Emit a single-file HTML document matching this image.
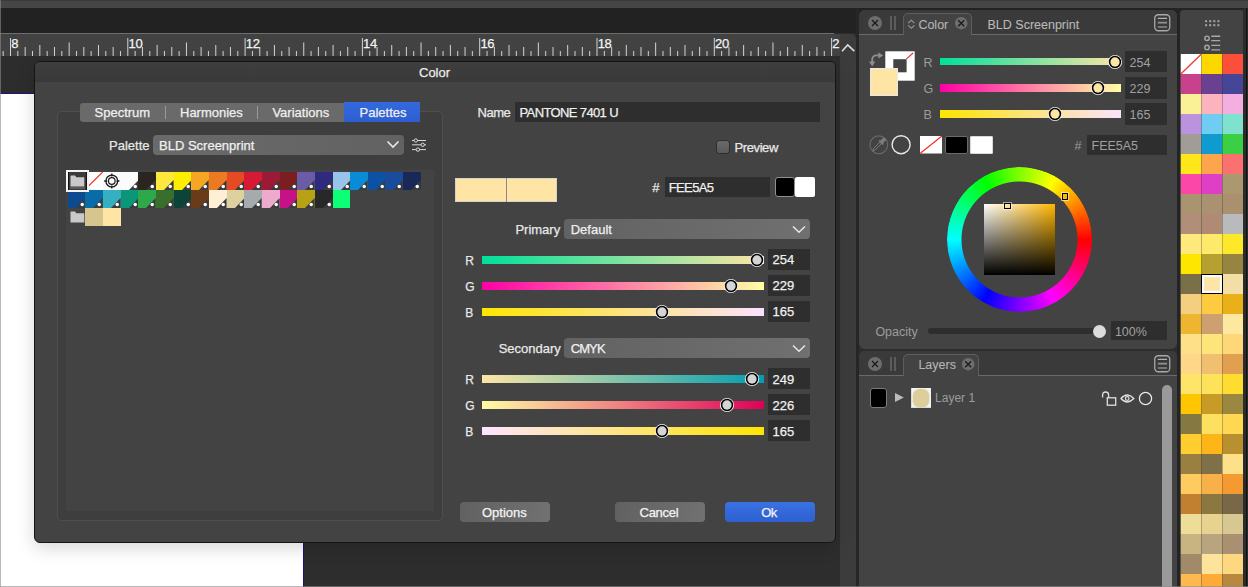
<!DOCTYPE html><html><head><meta charset="utf-8"><style>
*{margin:0;padding:0;box-sizing:border-box}
html,body{width:1248px;height:587px;overflow:hidden;background:#2d2d2d;font-family:"Liberation Sans",sans-serif;font-size:13px;color:#e8e8e8}
.abs{position:absolute}
.t{position:absolute;white-space:nowrap;line-height:1;-webkit-text-stroke:0.25px currentColor}
</style></head><body>
<div class="abs" style="left:0;top:0;width:1248px;height:1px;background:#3a3a3a"></div>
<div class="abs" style="left:0;top:1px;width:1248px;height:7px;background:#464646"></div>
<div class="abs" style="left:0;top:8px;width:1248px;height:25px;background:#222222"></div>
<div class="abs" style="left:0;top:33px;width:834px;height:1px;background:#6e6e6e"></div>
<div class="abs" style="left:0;top:34px;width:840px;height:22px;background:#424242"></div>
<svg class="abs" style="left:0;top:0" width="840" height="60"><g fill="#d4d4d4"><rect x="2.67" y="51.0" width="1" height="5.0"/><rect x="10.00" y="38.0" width="1" height="18.0"/><rect x="17.33" y="51.0" width="1" height="5.0"/><rect x="24.66" y="47.0" width="1" height="9.0"/><rect x="31.99" y="51.0" width="1" height="5.0"/><rect x="39.33" y="45.0" width="1" height="11.0"/><rect x="46.66" y="51.0" width="1" height="5.0"/><rect x="53.99" y="47.0" width="1" height="9.0"/><rect x="61.32" y="51.0" width="1" height="5.0"/><rect x="68.65" y="42.5" width="1" height="13.5"/><rect x="75.98" y="51.0" width="1" height="5.0"/><rect x="83.31" y="47.0" width="1" height="9.0"/><rect x="90.64" y="51.0" width="1" height="5.0"/><rect x="97.97" y="45.0" width="1" height="11.0"/><rect x="105.31" y="51.0" width="1" height="5.0"/><rect x="112.64" y="47.0" width="1" height="9.0"/><rect x="119.97" y="51.0" width="1" height="5.0"/><rect x="127.30" y="38.0" width="1" height="18.0"/><rect x="134.63" y="51.0" width="1" height="5.0"/><rect x="141.96" y="47.0" width="1" height="9.0"/><rect x="149.29" y="51.0" width="1" height="5.0"/><rect x="156.62" y="45.0" width="1" height="11.0"/><rect x="163.96" y="51.0" width="1" height="5.0"/><rect x="171.29" y="47.0" width="1" height="9.0"/><rect x="178.62" y="51.0" width="1" height="5.0"/><rect x="185.95" y="42.5" width="1" height="13.5"/><rect x="193.28" y="51.0" width="1" height="5.0"/><rect x="200.61" y="47.0" width="1" height="9.0"/><rect x="207.94" y="51.0" width="1" height="5.0"/><rect x="215.28" y="45.0" width="1" height="11.0"/><rect x="222.61" y="51.0" width="1" height="5.0"/><rect x="229.94" y="47.0" width="1" height="9.0"/><rect x="237.27" y="51.0" width="1" height="5.0"/><rect x="244.60" y="38.0" width="1" height="18.0"/><rect x="251.93" y="51.0" width="1" height="5.0"/><rect x="259.26" y="47.0" width="1" height="9.0"/><rect x="266.59" y="51.0" width="1" height="5.0"/><rect x="273.93" y="45.0" width="1" height="11.0"/><rect x="281.26" y="51.0" width="1" height="5.0"/><rect x="288.59" y="47.0" width="1" height="9.0"/><rect x="295.92" y="51.0" width="1" height="5.0"/><rect x="303.25" y="42.5" width="1" height="13.5"/><rect x="310.58" y="51.0" width="1" height="5.0"/><rect x="317.91" y="47.0" width="1" height="9.0"/><rect x="325.24" y="51.0" width="1" height="5.0"/><rect x="332.57" y="45.0" width="1" height="11.0"/><rect x="339.91" y="51.0" width="1" height="5.0"/><rect x="347.24" y="47.0" width="1" height="9.0"/><rect x="354.57" y="51.0" width="1" height="5.0"/><rect x="361.90" y="38.0" width="1" height="18.0"/><rect x="369.23" y="51.0" width="1" height="5.0"/><rect x="376.56" y="47.0" width="1" height="9.0"/><rect x="383.89" y="51.0" width="1" height="5.0"/><rect x="391.22" y="45.0" width="1" height="11.0"/><rect x="398.56" y="51.0" width="1" height="5.0"/><rect x="405.89" y="47.0" width="1" height="9.0"/><rect x="413.22" y="51.0" width="1" height="5.0"/><rect x="420.55" y="42.5" width="1" height="13.5"/><rect x="427.88" y="51.0" width="1" height="5.0"/><rect x="435.21" y="47.0" width="1" height="9.0"/><rect x="442.54" y="51.0" width="1" height="5.0"/><rect x="449.88" y="45.0" width="1" height="11.0"/><rect x="457.21" y="51.0" width="1" height="5.0"/><rect x="464.54" y="47.0" width="1" height="9.0"/><rect x="471.87" y="51.0" width="1" height="5.0"/><rect x="479.20" y="38.0" width="1" height="18.0"/><rect x="486.53" y="51.0" width="1" height="5.0"/><rect x="493.86" y="47.0" width="1" height="9.0"/><rect x="501.19" y="51.0" width="1" height="5.0"/><rect x="508.52" y="45.0" width="1" height="11.0"/><rect x="515.86" y="51.0" width="1" height="5.0"/><rect x="523.19" y="47.0" width="1" height="9.0"/><rect x="530.52" y="51.0" width="1" height="5.0"/><rect x="537.85" y="42.5" width="1" height="13.5"/><rect x="545.18" y="51.0" width="1" height="5.0"/><rect x="552.51" y="47.0" width="1" height="9.0"/><rect x="559.84" y="51.0" width="1" height="5.0"/><rect x="567.17" y="45.0" width="1" height="11.0"/><rect x="574.51" y="51.0" width="1" height="5.0"/><rect x="581.84" y="47.0" width="1" height="9.0"/><rect x="589.17" y="51.0" width="1" height="5.0"/><rect x="596.50" y="38.0" width="1" height="18.0"/><rect x="603.83" y="51.0" width="1" height="5.0"/><rect x="611.16" y="47.0" width="1" height="9.0"/><rect x="618.49" y="51.0" width="1" height="5.0"/><rect x="625.82" y="45.0" width="1" height="11.0"/><rect x="633.16" y="51.0" width="1" height="5.0"/><rect x="640.49" y="47.0" width="1" height="9.0"/><rect x="647.82" y="51.0" width="1" height="5.0"/><rect x="655.15" y="42.5" width="1" height="13.5"/><rect x="662.48" y="51.0" width="1" height="5.0"/><rect x="669.81" y="47.0" width="1" height="9.0"/><rect x="677.14" y="51.0" width="1" height="5.0"/><rect x="684.48" y="45.0" width="1" height="11.0"/><rect x="691.81" y="51.0" width="1" height="5.0"/><rect x="699.14" y="47.0" width="1" height="9.0"/><rect x="706.47" y="51.0" width="1" height="5.0"/><rect x="713.80" y="38.0" width="1" height="18.0"/><rect x="721.13" y="51.0" width="1" height="5.0"/><rect x="728.46" y="47.0" width="1" height="9.0"/><rect x="735.79" y="51.0" width="1" height="5.0"/><rect x="743.12" y="45.0" width="1" height="11.0"/><rect x="750.46" y="51.0" width="1" height="5.0"/><rect x="757.79" y="47.0" width="1" height="9.0"/><rect x="765.12" y="51.0" width="1" height="5.0"/><rect x="772.45" y="42.5" width="1" height="13.5"/><rect x="779.78" y="51.0" width="1" height="5.0"/><rect x="787.11" y="47.0" width="1" height="9.0"/><rect x="794.44" y="51.0" width="1" height="5.0"/><rect x="801.77" y="45.0" width="1" height="11.0"/><rect x="809.11" y="51.0" width="1" height="5.0"/><rect x="816.44" y="47.0" width="1" height="9.0"/><rect x="823.77" y="51.0" width="1" height="5.0"/><rect x="831.10" y="38.0" width="1" height="18.0"/></g></svg>
<div class="t" style="left:11.2px;top:37.3px;font-size:13px;color:#f4f4f4;letter-spacing:-0.3px">8</div>
<div class="t" style="left:128.5px;top:37.3px;font-size:13px;color:#f4f4f4;letter-spacing:-0.3px">10</div>
<div class="t" style="left:245.8px;top:37.3px;font-size:13px;color:#f4f4f4;letter-spacing:-0.3px">12</div>
<div class="t" style="left:363.1px;top:37.3px;font-size:13px;color:#f4f4f4;letter-spacing:-0.3px">14</div>
<div class="t" style="left:480.4px;top:37.3px;font-size:13px;color:#f4f4f4;letter-spacing:-0.3px">16</div>
<div class="t" style="left:597.7px;top:37.3px;font-size:13px;color:#f4f4f4;letter-spacing:-0.3px">18</div>
<div class="t" style="left:715.0px;top:37.3px;font-size:13px;color:#f4f4f4;letter-spacing:-0.3px">20</div>
<div class="t" style="left:832.3px;top:37.3px;font-size:13px;color:#f4f4f4;letter-spacing:-0.3px">2</div>
<div class="abs" style="left:0;top:0;width:1px;height:587px;background:rgba(140,140,140,0.6);z-index:5"></div>
<div class="abs" style="left:0;top:93px;width:303px;height:1px;background:#1d1080"></div>
<div class="abs" style="left:0;top:94px;width:303px;height:493px;background:#ffffff"></div>
<div class="abs" style="left:303px;top:93px;width:1px;height:494px;background:#1d1080"></div>
<div class="abs" style="left:840px;top:34px;width:16px;height:553px;background:#3c3c3c;border-top-right-radius:5px"></div>
<div class="abs" style="left:856px;top:8px;width:3px;height:579px;background:#262626"></div>
<svg class="abs" style="left:840px;top:40px" width="16" height="14"><polyline points="2,11.2 7.7,5 14.3,11.2" fill="none" stroke="#dcdcdc" stroke-width="1.6"/></svg>
<div class="abs" style="left:34px;top:61px;width:802px;height:482px;border-radius:6px;background:#434343;border:1px solid #151515;box-shadow:0 5px 18px rgba(0,0,0,0.16);overflow:hidden">
<div class="abs" style="left:0;top:0;width:800px;height:20px;background:linear-gradient(#3e3e3e,#393939)"></div>
</div>
<div class="t" style="left:419px;top:66px;font-size:13px;color:#ececec">Color</div>
<div class="abs" style="left:57px;top:111px;width:386px;height:410px;border:1px solid #4f4f4f;border-radius:5px;background:#3e3e3e"></div>
<div class="abs" style="left:66px;top:170px;width:368px;height:341px;background:#434343"></div>
<svg class="abs" style="left:85.40px;top:171.90px" width="18.15" height="18.15"><rect width="100%" height="100%" fill="#fff"/><line x1="0" y1="17.65" x2="17.65" y2="0" stroke="#f03a2a" stroke-width="1.2"/></svg>
<svg class="abs" style="left:103.05px;top:171.90px" width="18.15" height="18.15"><rect width="100%" height="100%" fill="#fafafa"/><g stroke="#1a1a1a" fill="none" stroke-width="1.3"><circle cx="8.8" cy="9" r="5.9"/><circle cx="8.8" cy="9" r="3.3" fill="#fff" stroke-width="1.2"/><path d="M1.2 9 H4.2 M13.4 9 H16.4 M8.8 1.4 V4.4 M8.8 13.6 V16.6"/></g></svg>
<svg class="abs" style="left:120.70px;top:171.90px" width="18.15" height="18.15"><rect width="18.15" height="100%" fill="#fbfbfb"/><polygon points="7.85,18.15 17.65,8.05 17.65,18.15" fill="#3b3b3b"/><circle cx="14.25" cy="14.55" r="1.75" fill="#fff"/></svg>
<svg class="abs" style="left:138.35px;top:171.90px" width="18.15" height="18.15"><rect width="18.15" height="100%" fill="#2a2520"/><polygon points="7.85,18.15 17.65,8.05 17.65,18.15" fill="#3b3b3b"/><circle cx="14.25" cy="14.55" r="1.75" fill="#fff"/></svg>
<svg class="abs" style="left:156.00px;top:171.90px" width="18.15" height="18.15"><rect width="18.15" height="100%" fill="#fde83d"/><polygon points="7.85,18.15 17.65,8.05 17.65,18.15" fill="#3b3b3b"/><circle cx="14.25" cy="14.55" r="1.75" fill="#fff"/></svg>
<svg class="abs" style="left:173.65px;top:171.90px" width="18.15" height="18.15"><rect width="18.15" height="100%" fill="#fdee00"/><polygon points="7.85,18.15 17.65,8.05 17.65,18.15" fill="#3b3b3b"/><circle cx="14.25" cy="14.55" r="1.75" fill="#fff"/></svg>
<svg class="abs" style="left:191.30px;top:171.90px" width="18.15" height="18.15"><rect width="18.15" height="100%" fill="#f5a623"/><polygon points="7.85,18.15 17.65,8.05 17.65,18.15" fill="#3b3b3b"/><circle cx="14.25" cy="14.55" r="1.75" fill="#fff"/></svg>
<svg class="abs" style="left:208.95px;top:171.90px" width="18.15" height="18.15"><rect width="18.15" height="100%" fill="#ec7a22"/><polygon points="7.85,18.15 17.65,8.05 17.65,18.15" fill="#3b3b3b"/><circle cx="14.25" cy="14.55" r="1.75" fill="#fff"/></svg>
<svg class="abs" style="left:226.60px;top:171.90px" width="18.15" height="18.15"><rect width="18.15" height="100%" fill="#e44b24"/><polygon points="7.85,18.15 17.65,8.05 17.65,18.15" fill="#3b3b3b"/><circle cx="14.25" cy="14.55" r="1.75" fill="#fff"/></svg>
<svg class="abs" style="left:244.25px;top:171.90px" width="18.15" height="18.15"><rect width="18.15" height="100%" fill="#d61a35"/><polygon points="7.85,18.15 17.65,8.05 17.65,18.15" fill="#3b3b3b"/><circle cx="14.25" cy="14.55" r="1.75" fill="#fff"/></svg>
<svg class="abs" style="left:261.90px;top:171.90px" width="18.15" height="18.15"><rect width="18.15" height="100%" fill="#9b1a35"/><polygon points="7.85,18.15 17.65,8.05 17.65,18.15" fill="#3b3b3b"/><circle cx="14.25" cy="14.55" r="1.75" fill="#fff"/></svg>
<svg class="abs" style="left:279.55px;top:171.90px" width="18.15" height="18.15"><rect width="18.15" height="100%" fill="#7a1e20"/><polygon points="7.85,18.15 17.65,8.05 17.65,18.15" fill="#3b3b3b"/><circle cx="14.25" cy="14.55" r="1.75" fill="#fff"/></svg>
<svg class="abs" style="left:297.20px;top:171.90px" width="18.15" height="18.15"><rect width="18.15" height="100%" fill="#6c5ba6"/><polygon points="7.85,18.15 17.65,8.05 17.65,18.15" fill="#3b3b3b"/><circle cx="14.25" cy="14.55" r="1.75" fill="#fff"/></svg>
<svg class="abs" style="left:314.85px;top:171.90px" width="18.15" height="18.15"><rect width="18.15" height="100%" fill="#2e2a7d"/><polygon points="7.85,18.15 17.65,8.05 17.65,18.15" fill="#3b3b3b"/><circle cx="14.25" cy="14.55" r="1.75" fill="#fff"/></svg>
<svg class="abs" style="left:332.50px;top:171.90px" width="18.15" height="18.15"><rect width="18.15" height="100%" fill="#98c4ea"/><polygon points="7.85,18.15 17.65,8.05 17.65,18.15" fill="#3b3b3b"/><circle cx="14.25" cy="14.55" r="1.75" fill="#fff"/></svg>
<svg class="abs" style="left:350.15px;top:171.90px" width="18.15" height="18.15"><rect width="18.15" height="100%" fill="#0a8bd6"/><polygon points="7.85,18.15 17.65,8.05 17.65,18.15" fill="#3b3b3b"/><circle cx="14.25" cy="14.55" r="1.75" fill="#fff"/></svg>
<svg class="abs" style="left:367.80px;top:171.90px" width="18.15" height="18.15"><rect width="18.15" height="100%" fill="#0d52a2"/><polygon points="7.85,18.15 17.65,8.05 17.65,18.15" fill="#3b3b3b"/><circle cx="14.25" cy="14.55" r="1.75" fill="#fff"/></svg>
<svg class="abs" style="left:385.45px;top:171.90px" width="18.15" height="18.15"><rect width="18.15" height="100%" fill="#1a4c9c"/><polygon points="7.85,18.15 17.65,8.05 17.65,18.15" fill="#3b3b3b"/><circle cx="14.25" cy="14.55" r="1.75" fill="#fff"/></svg>
<svg class="abs" style="left:403.10px;top:171.90px" width="18.15" height="18.15"><rect width="18.15" height="100%" fill="#1a2858"/><polygon points="7.85,18.15 17.65,8.05 17.65,18.15" fill="#3b3b3b"/><circle cx="14.25" cy="14.55" r="1.75" fill="#fff"/></svg>
<svg class="abs" style="left:67.75px;top:190.05px" width="18.15" height="18.15"><rect width="18.15" height="100%" fill="#0d4b8e"/><polygon points="7.85,18.15 17.65,8.05 17.65,18.15" fill="#3b3b3b"/><circle cx="14.25" cy="14.55" r="1.75" fill="#fff"/></svg>
<svg class="abs" style="left:85.40px;top:190.05px" width="18.15" height="18.15"><rect width="18.15" height="100%" fill="#0a6ba9"/><polygon points="7.85,18.15 17.65,8.05 17.65,18.15" fill="#3b3b3b"/><circle cx="14.25" cy="14.55" r="1.75" fill="#fff"/></svg>
<svg class="abs" style="left:103.05px;top:190.05px" width="18.15" height="18.15"><rect width="18.15" height="100%" fill="#35b0c0"/><polygon points="7.85,18.15 17.65,8.05 17.65,18.15" fill="#3b3b3b"/><circle cx="14.25" cy="14.55" r="1.75" fill="#fff"/></svg>
<svg class="abs" style="left:120.70px;top:190.05px" width="18.15" height="18.15"><rect width="18.15" height="100%" fill="#0a9679"/><polygon points="7.85,18.15 17.65,8.05 17.65,18.15" fill="#3b3b3b"/><circle cx="14.25" cy="14.55" r="1.75" fill="#fff"/></svg>
<svg class="abs" style="left:138.35px;top:190.05px" width="18.15" height="18.15"><rect width="18.15" height="100%" fill="#2da84b"/><polygon points="7.85,18.15 17.65,8.05 17.65,18.15" fill="#3b3b3b"/><circle cx="14.25" cy="14.55" r="1.75" fill="#fff"/></svg>
<svg class="abs" style="left:156.00px;top:190.05px" width="18.15" height="18.15"><rect width="18.15" height="100%" fill="#3a6e2c"/><polygon points="7.85,18.15 17.65,8.05 17.65,18.15" fill="#3b3b3b"/><circle cx="14.25" cy="14.55" r="1.75" fill="#fff"/></svg>
<svg class="abs" style="left:173.65px;top:190.05px" width="18.15" height="18.15"><rect width="18.15" height="100%" fill="#0c4538"/><polygon points="7.85,18.15 17.65,8.05 17.65,18.15" fill="#3b3b3b"/><circle cx="14.25" cy="14.55" r="1.75" fill="#fff"/></svg>
<svg class="abs" style="left:191.30px;top:190.05px" width="18.15" height="18.15"><rect width="18.15" height="100%" fill="#6a3b18"/><polygon points="7.85,18.15 17.65,8.05 17.65,18.15" fill="#3b3b3b"/><circle cx="14.25" cy="14.55" r="1.75" fill="#fff"/></svg>
<svg class="abs" style="left:208.95px;top:190.05px" width="18.15" height="18.15"><rect width="18.15" height="100%" fill="#fdf0d6"/><polygon points="7.85,18.15 17.65,8.05 17.65,18.15" fill="#3b3b3b"/><circle cx="14.25" cy="14.55" r="1.75" fill="#fff"/></svg>
<svg class="abs" style="left:226.60px;top:190.05px" width="18.15" height="18.15"><rect width="18.15" height="100%" fill="#ded1a0"/><polygon points="7.85,18.15 17.65,8.05 17.65,18.15" fill="#3b3b3b"/><circle cx="14.25" cy="14.55" r="1.75" fill="#fff"/></svg>
<svg class="abs" style="left:244.25px;top:190.05px" width="18.15" height="18.15"><rect width="18.15" height="100%" fill="#a5aaad"/><polygon points="7.85,18.15 17.65,8.05 17.65,18.15" fill="#3b3b3b"/><circle cx="14.25" cy="14.55" r="1.75" fill="#fff"/></svg>
<svg class="abs" style="left:261.90px;top:190.05px" width="18.15" height="18.15"><rect width="18.15" height="100%" fill="#eeaacc"/><polygon points="7.85,18.15 17.65,8.05 17.65,18.15" fill="#3b3b3b"/><circle cx="14.25" cy="14.55" r="1.75" fill="#fff"/></svg>
<svg class="abs" style="left:279.55px;top:190.05px" width="18.15" height="18.15"><rect width="18.15" height="100%" fill="#c51286"/><polygon points="7.85,18.15 17.65,8.05 17.65,18.15" fill="#3b3b3b"/><circle cx="14.25" cy="14.55" r="1.75" fill="#fff"/></svg>
<svg class="abs" style="left:297.20px;top:190.05px" width="18.15" height="18.15"><rect width="18.15" height="100%" fill="#b7a115"/><polygon points="7.85,18.15 17.65,8.05 17.65,18.15" fill="#3b3b3b"/><circle cx="14.25" cy="14.55" r="1.75" fill="#fff"/></svg>
<svg class="abs" style="left:314.85px;top:190.05px" width="18.15" height="18.15"><rect width="18.15" height="100%" fill="#282828"/><polygon points="7.85,18.15 17.65,8.05 17.65,18.15" fill="#3b3b3b"/><circle cx="14.25" cy="14.55" r="1.75" fill="#fff"/></svg>
<div class="abs" style="left:332.50px;top:190.05px;width:17.65px;height:18.15px;background:#0bff77"></div>
<div class="abs" style="left:85.40px;top:208.20px;width:17.65px;height:18.15px;background:#d6c68d"></div>
<div class="abs" style="left:103.05px;top:208.20px;width:17.65px;height:18.15px;background:#fee5a5"></div>
<div class="abs" style="left:66px;top:169.8px;width:22.6px;height:22.7px;border:2px solid #f4f4f4;background:#111"></div>
<div class="abs" style="left:68.5px;top:172.3px;width:17.6px;height:17.7px;background:#3a3a3a"></div>
<svg class="abs" style="left:70.0px;top:174.7px" width="15" height="12"><path d="M0.5 1.2 Q0.5 0.5 1.2 0.5 L5 0.5 L6.3 2.3 L13.8 2.3 Q14.3 2.3 14.3 2.8 L14.3 11.5 L0.5 11.5 Z" fill="#c9c9c9"/></svg>
<div class="abs" style="left:70px;top:186.5px;width:14.5px;height:2.5px;background:#5a5a5a"></div>
<svg class="abs" style="left:69.8px;top:211.0px" width="15" height="12"><path d="M0.5 1.2 Q0.5 0.5 1.2 0.5 L5 0.5 L6.3 2.3 L13.8 2.3 Q14.3 2.3 14.3 2.8 L14.3 11.5 L0.5 11.5 Z" fill="#c9c9c9"/></svg>
<div class="abs" style="left:80px;top:103px;width:340px;height:19px;background:#6a6a6a;border-radius:3px 0 0 3px"></div>
<div class="abs" style="left:344px;top:102.3px;width:76px;height:19.9px;background:linear-gradient(#3369de,#2e5fd1)"></div>
<div class="abs" style="left:165px;top:106px;width:1px;height:13px;background:#9a9a9a"></div>
<div class="abs" style="left:257px;top:106px;width:1px;height:13px;background:#9a9a9a"></div>
<div class="t" style="left:94.5px;top:106px;color:#f0f0f0">Spectrum</div>
<div class="t" style="left:180.0px;top:106px;color:#f0f0f0">Harmonies</div>
<div class="t" style="left:272.4px;top:106px;color:#f0f0f0">Variations</div>
<div class="t" style="left:359.5px;top:106px;color:#f0f0f0">Palettes</div>
<div class="t" style="left:109px;top:138.5px;color:#e8e8e8">Palette</div>
<div class="abs" style="left:153px;top:135px;width:251px;height:20px;border-radius:4px;background:linear-gradient(90deg,#6a6a6a,#626262)"></div>
<div class="t" style="left:159px;top:138.5px;color:#f0f0f0">BLD Screenprint</div>
<svg class="abs" style="left:385px;top:139px" width="16" height="12"><polyline points="2.5,2.5 8,8 13.5,2.5" fill="none" stroke="#e8e8e8" stroke-width="1.6"/></svg>
<svg class="abs" style="left:410px;top:136px" width="18" height="17"><g stroke="#d8d8d8" stroke-width="1" fill="#434343"><line x1="2" y1="4.5" x2="16" y2="4.5"/><line x1="2" y1="8.8" x2="16" y2="8.8"/><line x1="2" y1="13.6" x2="16" y2="13.6"/><circle cx="5.8" cy="4.5" r="1.7"/><circle cx="12.7" cy="8.8" r="1.7"/><circle cx="7.9" cy="13.6" r="1.7"/></g></svg>
<div class="t" style="left:477.6px;top:106px;color:#e8e8e8;letter-spacing:-0.5px">Name</div>
<div class="abs" style="left:515px;top:102px;width:305px;height:20px;background:#2e2e2e"></div>
<div class="t" style="left:519.5px;top:106px;color:#f0f0f0;letter-spacing:-0.62px">PANTONE 7401 U</div>
<div class="abs" style="left:715.5px;top:139.6px;width:14.8px;height:14.8px;border-radius:3.5px;background:linear-gradient(#6a6a6a,#5a5a5a);border:1px solid #2e2e2e"></div>
<div class="t" style="left:734.5px;top:141px;color:#e8e8e8;letter-spacing:-0.4px">Preview</div>
<div class="abs" style="left:455px;top:177.5px;width:102px;height:24.5px;background:#fee5a5;border:1px solid #d9d4c8"></div>
<div class="abs" style="left:506px;top:178px;width:1px;height:23.5px;background:#8a8a8a"></div>
<div class="t" style="left:652.3px;top:181px;color:#e8e8e8">#</div>
<div class="abs" style="left:665px;top:177px;width:105px;height:19.5px;background:#2e2e2e"></div>
<div class="t" style="left:668.7px;top:181px;color:#f0f0f0;letter-spacing:-0.6px">FEE5A5</div>
<div class="abs" style="left:775px;top:177px;width:20px;height:20px;background:#000;border:1px solid #909090;border-radius:3px"></div>
<div class="abs" style="left:795px;top:177px;width:20px;height:20px;background:#fff;border-radius:2px"></div>
<div class="t" style="left:515.4px;top:222.6px;color:#e8e8e8">Primary</div>
<div class="abs" style="left:564px;top:219px;width:246px;height:19.5px;border-radius:4px;background:linear-gradient(100deg,#626262,#707070)"></div>
<div class="t" style="left:570.7px;top:222.6px;color:#f0f0f0">Default</div>
<svg class="abs" style="left:790px;top:222.6px" width="18" height="12"><polyline points="3,3.5 9,9.3 15,3.5" fill="none" stroke="#e8e8e8" stroke-width="1.5"/></svg>
<div class="t" style="left:498.7px;top:341.6px;color:#e8e8e8">Secondary</div>
<div class="abs" style="left:564px;top:338px;width:246px;height:19.5px;border-radius:4px;background:linear-gradient(100deg,#626262,#707070)"></div>
<div class="t" style="left:570.7px;top:341.6px;color:#f0f0f0"><span style="letter-spacing:-0.9px">CMYK</span></div>
<svg class="abs" style="left:790px;top:341.6px" width="18" height="12"><polyline points="3,3.5 9,9.3 15,3.5" fill="none" stroke="#e8e8e8" stroke-width="1.5"/></svg>
<div class="t" style="left:465.3px;top:255.1px;font-size:12px;color:#e8e8e8">R</div>
<div class="abs" style="left:482px;top:256.20px;width:282px;height:7.5px;background:linear-gradient(90deg,#00e09a,#fee5a5)"></div>
<svg class="abs" style="left:749.14px;top:251.95px" width="16" height="16"><circle cx="8" cy="8" r="7.1" fill="#f4f4f4"/><circle cx="8" cy="8" r="6.2" fill="#000"/><circle cx="8" cy="8" r="4.65" fill="#d4d4d4"/></svg>
<div class="abs" style="left:768px;top:249.1px;width:42px;height:21px;background:#2e2e2e"></div>
<div class="t" style="left:772.5px;top:253.4px;color:#f0f0f0">254</div>
<div class="t" style="left:465.3px;top:281.1px;font-size:12px;color:#e8e8e8">G</div>
<div class="abs" style="left:482px;top:282.15px;width:282px;height:7.5px;background:linear-gradient(90deg,#fe00a5,#fefea5)"></div>
<svg class="abs" style="left:722.54px;top:277.90px" width="16" height="16"><circle cx="8" cy="8" r="7.1" fill="#f4f4f4"/><circle cx="8" cy="8" r="6.2" fill="#000"/><circle cx="8" cy="8" r="4.65" fill="#d4d4d4"/></svg>
<div class="abs" style="left:768px;top:275.1px;width:42px;height:21px;background:#2e2e2e"></div>
<div class="t" style="left:772.5px;top:279.4px;color:#f0f0f0">229</div>
<div class="t" style="left:465.3px;top:307.1px;font-size:12px;color:#e8e8e8">B</div>
<div class="abs" style="left:482px;top:308.10px;width:282px;height:7.5px;background:linear-gradient(90deg,#fee500,#fbe2ff)"></div>
<svg class="abs" style="left:654.45px;top:303.85px" width="16" height="16"><circle cx="8" cy="8" r="7.1" fill="#f4f4f4"/><circle cx="8" cy="8" r="6.2" fill="#000"/><circle cx="8" cy="8" r="4.65" fill="#d4d4d4"/></svg>
<div class="abs" style="left:768px;top:301.1px;width:42px;height:21px;background:#2e2e2e"></div>
<div class="t" style="left:772.5px;top:305.4px;color:#f0f0f0">165</div>
<div class="t" style="left:465.3px;top:374.3px;font-size:12px;color:#e8e8e8">R</div>
<div class="abs" style="left:482px;top:375.35px;width:282px;height:7.5px;background:linear-gradient(90deg,#fde5a5,#009fb0)"></div>
<svg class="abs" style="left:743.82px;top:371.10px" width="16" height="16"><circle cx="8" cy="8" r="7.1" fill="#f4f4f4"/><circle cx="8" cy="8" r="6.2" fill="#000"/><circle cx="8" cy="8" r="4.65" fill="#d4d4d4"/></svg>
<div class="abs" style="left:768px;top:368.3px;width:42px;height:21px;background:#2e2e2e"></div>
<div class="t" style="left:772.5px;top:372.6px;color:#f0f0f0">249</div>
<div class="t" style="left:465.3px;top:400.2px;font-size:12px;color:#e8e8e8">G</div>
<div class="abs" style="left:482px;top:401.25px;width:282px;height:7.5px;background:linear-gradient(90deg,#fefba5,#e0005a)"></div>
<svg class="abs" style="left:719.35px;top:397.00px" width="16" height="16"><circle cx="8" cy="8" r="7.1" fill="#f4f4f4"/><circle cx="8" cy="8" r="6.2" fill="#000"/><circle cx="8" cy="8" r="4.65" fill="#d4d4d4"/></svg>
<div class="abs" style="left:768px;top:394.2px;width:42px;height:21px;background:#2e2e2e"></div>
<div class="t" style="left:772.5px;top:398.5px;color:#f0f0f0">226</div>
<div class="t" style="left:465.3px;top:426.2px;font-size:12px;color:#e8e8e8">B</div>
<div class="abs" style="left:482px;top:427.25px;width:282px;height:7.5px;background:linear-gradient(90deg,#fde5ff,#fee500)"></div>
<svg class="abs" style="left:654.45px;top:423.00px" width="16" height="16"><circle cx="8" cy="8" r="7.1" fill="#f4f4f4"/><circle cx="8" cy="8" r="6.2" fill="#000"/><circle cx="8" cy="8" r="4.65" fill="#d4d4d4"/></svg>
<div class="abs" style="left:768px;top:420.2px;width:42px;height:21px;background:#2e2e2e"></div>
<div class="t" style="left:772.5px;top:424.5px;color:#f0f0f0">165</div>
<div class="abs" style="left:460px;top:502px;width:90px;height:20px;border-radius:4px;background:linear-gradient(100deg,#616161,#717171)"></div>
<div class="t" style="left:482.0px;top:506px;color:#f4f4f4">Options</div>
<div class="abs" style="left:615px;top:502px;width:90px;height:20px;border-radius:4px;background:linear-gradient(100deg,#616161,#717171)"></div>
<div class="t" style="left:639.6px;top:506px;color:#f4f4f4"><span style="letter-spacing:-0.3px">Cancel</span></div>
<div class="abs" style="left:725px;top:502px;width:90px;height:20px;border-radius:4px;background:linear-gradient(#3a72e4,#2d5fd0)"></div>
<div class="t" style="left:761.2px;top:506px;color:#f4f4f4"><span style="letter-spacing:-0.6px">Ok</span></div>
<div class="abs" style="left:859px;top:10px;width:318px;height:338.5px;background:#434343;border-radius:6px"></div>
<div class="abs" style="left:859px;top:10px;width:318px;height:24.4px;background:#3a3a3a;border-radius:6px 6px 0 0"></div>
<div class="abs" style="left:859px;top:33.5px;width:318px;height:1px;background:#6a6a6a"></div>
<svg class="abs" style="left:867.0px;top:15.0px" width="16" height="16"><circle cx="8.0" cy="8.0" r="7.0" fill="#6d6d6d"/><path d="M5.0 5.0 L11.0 11.0 M11.0 5.0 L5.0 11.0" stroke="#1a1a1a" stroke-width="1.3"/></svg>
<div class="abs" style="left:890px;top:16.0px;width:2px;height:14px;background:#5c5c5c"></div>
<div class="abs" style="left:894px;top:16.0px;width:2px;height:14px;background:#5c5c5c"></div>
<div class="abs" style="left:902.6px;top:12.7px;width:69.9px;height:22.3px;background:#434343;border:1px solid #5e5e5e;border-bottom:none;border-radius:5px 5px 0 0"></div>
<div class="t" style="left:918.4px;top:18.6px;font-size:12.5px;color:#b4b4b4;-webkit-text-stroke:0.1px">Color</div>
<svg class="abs" style="left:953.9px;top:15.8px" width="14" height="14"><circle cx="7.2" cy="7.2" r="6.2" fill="#6d6d6d"/><path d="M4.2 4.2 L10.2 10.2 M10.2 4.2 L4.2 10.2" stroke="#1a1a1a" stroke-width="1.3"/></svg>
<svg class="abs" style="left:1153.5px;top:14.3px" width="17" height="18"><rect x="0.75" y="0.75" width="15" height="16" rx="3.5" fill="none" stroke="#a8a8a8" stroke-width="1.3"/><path d="M3.8 4.3 H13 M3.8 13 H13" stroke="#b0b0b0" stroke-width="1.2"/><path d="M3.8 8.65 H13" stroke="#909090" stroke-width="1.8"/></svg>
<svg class="abs" style="left:907px;top:19px" width="9" height="11"><path d="M1.2 4.2 L4.3 1.2 L7.4 4.2 M1.2 6.3 L4.3 9.3 L7.4 6.3" fill="none" stroke="#9a9a9a" stroke-width="1.1"/></svg><div class="t" style="left:987.5px;top:18.7px;font-size:12.5px;color:#b8b8b8;-webkit-text-stroke:0.1px">BLD Screenprint</div>
<svg class="abs" style="left:885px;top:51px" width="30" height="30"><rect x="0.3" y="0.3" width="29.4" height="29.4" fill="#fff"/><rect x="8.3" y="8.2" width="13.3" height="13.1" fill="#434343"/><line x1="21.3" y1="8.2" x2="28" y2="2" stroke="#f02a1a" stroke-width="1.1"/></svg>
<div class="abs" style="left:869.5px;top:67.7px;width:28.8px;height:28.8px;background:#fee5a5;border:1px solid #e8e8e8"></div>
<svg class="abs" style="left:869px;top:52px" width="16" height="15"><path d="M3.2 12.5 L3.2 8 Q3.2 3.4 7.5 3.4 L10 3.4" fill="none" stroke="#8e8e8e" stroke-width="1.8"/><polygon points="9.3,0.3 14.3,3.4 9.3,6.5" fill="#8e8e8e"/><polygon points="0.1,9.6 3.2,14.5 6.3,9.6" fill="#8e8e8e"/></svg>
<div class="t" style="left:923.5px;top:57.0px;font-size:12.5px;color:#9c9c9c;-webkit-text-stroke:0">R</div>
<div class="abs" style="left:940px;top:58.15px;width:181px;height:7.3px;background:linear-gradient(90deg,#00e09a,#fee5a5)"></div>
<svg class="abs" style="left:1106.83px;top:53.80px" width="16" height="16"><circle cx="8" cy="8" r="7.1" fill="#f4f4f4"/><circle cx="8" cy="8" r="6.2" fill="#000"/><circle cx="8" cy="8" r="4.65" fill="#fee5a5"/></svg>
<div class="abs" style="left:1125.4px;top:50.9px;width:41.6px;height:21.6px;background:#2e2e2e"></div>
<div class="t" style="left:1129.5px;top:57.0px;font-size:12.5px;color:#a0a0a0;-webkit-text-stroke:0">254</div>
<div class="t" style="left:923.5px;top:83.3px;font-size:12.5px;color:#9c9c9c;-webkit-text-stroke:0">G</div>
<div class="abs" style="left:940px;top:84.45px;width:181px;height:7.3px;background:linear-gradient(90deg,#fe00a5,#fefea5)"></div>
<svg class="abs" style="left:1090.14px;top:80.10px" width="16" height="16"><circle cx="8" cy="8" r="7.1" fill="#f4f4f4"/><circle cx="8" cy="8" r="6.2" fill="#000"/><circle cx="8" cy="8" r="4.65" fill="#fee5a5"/></svg>
<div class="abs" style="left:1125.4px;top:77.2px;width:41.6px;height:21.6px;background:#2e2e2e"></div>
<div class="t" style="left:1129.5px;top:83.3px;font-size:12.5px;color:#a0a0a0;-webkit-text-stroke:0">229</div>
<div class="t" style="left:923.5px;top:109.2px;font-size:12.5px;color:#9c9c9c;-webkit-text-stroke:0">B</div>
<div class="abs" style="left:940px;top:110.35px;width:181px;height:7.3px;background:linear-gradient(90deg,#fee500,#fbe2ff)"></div>
<svg class="abs" style="left:1047.39px;top:106.00px" width="16" height="16"><circle cx="8" cy="8" r="7.1" fill="#f4f4f4"/><circle cx="8" cy="8" r="6.2" fill="#000"/><circle cx="8" cy="8" r="4.65" fill="#fee5a5"/></svg>
<div class="abs" style="left:1125.4px;top:103.1px;width:41.6px;height:21.6px;background:#2e2e2e"></div>
<div class="t" style="left:1129.5px;top:109.2px;font-size:12.5px;color:#a0a0a0;-webkit-text-stroke:0">165</div>
<svg class="abs" style="left:868px;top:134px" width="24" height="22"><circle cx="10.8" cy="10.8" r="8.9" fill="none" stroke="#6a6a6a" stroke-width="1.1"/><g transform="translate(10.8,10.8) rotate(45)" fill="#7c7c7c"><rect x="-1.8" y="-9" width="3.6" height="5.2" rx="1.6"/><rect x="-2.9" y="-4.6" width="5.8" height="2.2" rx="0.9"/><path d="M-1.1 -2.6 L-1.1 6.2 L0 8.6 L1.1 6.2 L1.1 -2.6" fill="none" stroke="#7c7c7c" stroke-width="0.9"/></g></svg>
<svg class="abs" style="left:890px;top:134px" width="24" height="22"><circle cx="11.1" cy="10.7" r="9" fill="none" stroke="#eaeaea" stroke-width="1.4"/></svg>
<svg class="abs" style="left:920.4px;top:136.1px" width="22" height="17.5"><rect width="22" height="17.5" fill="#fff"/><line x1="0" y1="17.5" x2="22" y2="0" stroke="#f02a1a" stroke-width="1.2"/></svg>
<div class="abs" style="left:944.7px;top:136.1px;width:23.6px;height:17.5px;background:#000;border:1px solid #6a6a6a;border-radius:2px"></div>
<div class="abs" style="left:970.1px;top:136.1px;width:22.7px;height:17.5px;background:#fff;border:1px solid #d8d8d8;border-radius:1px"></div>
<div class="t" style="left:1074.5px;top:140px;font-size:12.5px;color:#9c9c9c;-webkit-text-stroke:0">#</div>
<div class="abs" style="left:1087px;top:135.2px;width:80px;height:19.5px;background:#2e2e2e"></div>
<div class="t" style="left:1091.5px;top:140.3px;font-size:12.5px;color:#a0a0a0;-webkit-text-stroke:0">FEE5A5</div>
<div class="abs" style="left:946.5px;top:166.5px;width:145px;height:145px;border-radius:50%;background:conic-gradient(from 90deg,#f00,#f0f 60deg,#00f 120deg,#0ff 180deg,#0f0 240deg,#ff0 300deg,#f00 360deg);-webkit-mask:radial-gradient(circle,transparent 57.5px,#000 58.5px);mask:radial-gradient(circle,transparent 57.5px,#000 58.5px)"></div>
<div class="abs" style="left:983.5px;top:203.6px;width:71px;height:71px;background:linear-gradient(to top,#000,transparent),linear-gradient(90deg,#fff,#ffb700)"></div>
<div class="abs" style="left:1061.7px;top:193px;width:6.6px;height:6.6px;border:1px solid #000;box-shadow:0 0 0 1px rgba(255,255,255,0.55)"></div>
<div class="abs" style="left:1004.2px;top:202.9px;width:6.6px;height:6.6px;border:1px solid #000;box-shadow:0 0 0 1px rgba(255,255,255,0.55)"></div>
<div class="t" style="left:875.4px;top:326.2px;font-size:12.5px;color:#9c9c9c;-webkit-text-stroke:0">Opacity</div>
<div class="abs" style="left:928.3px;top:327.9px;width:176px;height:6px;border-radius:3px;background:#2e2e2e"></div>
<div class="abs" style="left:1093.3px;top:324.6px;width:13.2px;height:13.2px;border-radius:50%;background:#dcdcdc"></div>
<div class="abs" style="left:1110.8px;top:320.9px;width:56.2px;height:19.6px;background:#2e2e2e"></div>
<div class="t" style="left:1114.9px;top:326px;font-size:12.5px;color:#a0a0a0;-webkit-text-stroke:0">100%</div>
<div class="abs" style="left:859px;top:351px;width:318px;height:236px;background:#434343;border-radius:6px 6px 0 0"></div>
<div class="abs" style="left:859px;top:351px;width:318px;height:24.4px;background:#3a3a3a;border-radius:6px 6px 0 0"></div>
<div class="abs" style="left:859px;top:374.5px;width:318px;height:1px;background:#6a6a6a"></div>
<svg class="abs" style="left:867.0px;top:356.0px" width="16" height="16"><circle cx="8.0" cy="8.0" r="7.0" fill="#6d6d6d"/><path d="M5.0 5.0 L11.0 11.0 M11.0 5.0 L5.0 11.0" stroke="#1a1a1a" stroke-width="1.3"/></svg>
<div class="abs" style="left:890px;top:357.0px;width:2px;height:14px;background:#5c5c5c"></div>
<div class="abs" style="left:894px;top:357.0px;width:2px;height:14px;background:#5c5c5c"></div>
<div class="abs" style="left:902.6px;top:353.7px;width:76.4px;height:22.3px;background:#434343;border:1px solid #5e5e5e;border-bottom:none;border-radius:5px 5px 0 0"></div>
<div class="t" style="left:918.4px;top:358.8px;font-size:12.5px;color:#b4b4b4;-webkit-text-stroke:0.1px">Layers</div>
<svg class="abs" style="left:960.8px;top:356.8px" width="14" height="14"><circle cx="7.2" cy="7.2" r="6.2" fill="#6d6d6d"/><path d="M4.2 4.2 L10.2 10.2 M10.2 4.2 L4.2 10.2" stroke="#1a1a1a" stroke-width="1.3"/></svg>
<svg class="abs" style="left:1153.5px;top:355.3px" width="17" height="18"><rect x="0.75" y="0.75" width="15" height="16" rx="3.5" fill="none" stroke="#a8a8a8" stroke-width="1.3"/><path d="M3.8 4.3 H13 M3.8 13 H13" stroke="#b0b0b0" stroke-width="1.2"/><path d="M3.8 8.65 H13" stroke="#909090" stroke-width="1.8"/></svg>
<div class="abs" style="left:869.5px;top:388.4px;width:17.4px;height:20.1px;background:#000;border:1px solid #7a7a7a;border-radius:3px"></div>
<svg class="abs" style="left:894px;top:392px" width="11" height="11"><polygon points="1,1 9.8,5.5 1,10" fill="#bcbcbc"/></svg>
<svg class="abs" style="left:910.9px;top:388.4px" width="20.3" height="20.1"><rect width="20.3" height="20.1" fill="#d6d6d6"/><rect x="0.8" y="0" width="19.5" height="19.3" fill="#f2f2f2"/><rect x="1.8" y="1" width="16.5" height="18.5" rx="6.5" fill="#dccf9c"/></svg>
<div class="t" style="left:935.1px;top:392px;font-size:12px;color:#9c9c9c;-webkit-text-stroke:0">Layer 1</div>
<svg class="abs" style="left:1101px;top:391px" width="16" height="16"><path d="M1.6 6.6 L1.6 4 Q1.6 1 4.6 1 Q7.6 1 7.6 4 L7.6 6.8" fill="none" stroke="#e0e0e0" stroke-width="1.3"/><rect x="6.3" y="6.8" width="8.4" height="7.4" fill="none" stroke="#e0e0e0" stroke-width="1.3"/></svg>
<svg class="abs" style="left:1120px;top:392px" width="15" height="13"><path d="M1 6.5 Q7.3 -0.5 13.8 6.5 Q7.3 13.5 1 6.5 Z" fill="none" stroke="#e0e0e0" stroke-width="1.3"/><circle cx="7.2" cy="6.5" r="1.8" fill="none" stroke="#e0e0e0" stroke-width="1.2"/></svg>
<svg class="abs" style="left:1137.5px;top:391px" width="16" height="16"><circle cx="7.5" cy="7.5" r="6.1" fill="none" stroke="#e8e8e8" stroke-width="1.3"/></svg>
<div class="abs" style="left:1162.1px;top:385px;width:9.6px;height:210px;border-radius:5px;background:#9a9a9a"></div>
<div class="abs" style="left:1177px;top:8px;width:71px;height:579px;background:#242424"></div>
<div class="abs" style="left:1180px;top:10px;width:63.5px;height:577px;background:#434343;border-radius:4px 4px 0 0"></div>
<svg class="abs" style="left:1203px;top:18px" width="18" height="10"><g fill="#a8a8a8"><rect x="2.1" y="2.2" width="2" height="2"/><rect x="2.1" y="6.2" width="2" height="2"/><rect x="6.2" y="2.2" width="2" height="2"/><rect x="6.2" y="6.2" width="2" height="2"/><rect x="10.3" y="2.2" width="2" height="2"/><rect x="10.3" y="6.2" width="2" height="2"/><rect x="14.4" y="2.2" width="2" height="2"/><rect x="14.4" y="6.2" width="2" height="2"/></g></svg>
<svg class="abs" style="left:1202px;top:34px" width="20" height="18"><g fill="none" stroke="#a8a8a8" stroke-width="1.4"><circle cx="5" cy="4.3" r="2.2"/><circle cx="5" cy="13.4" r="2.2"/></g><path d="M9.3 2.2 H18.2 M9.3 6.6 H18.2 M9.3 11.4 H18.2 M9.3 15.9 H18.2" stroke="#a8a8a8" stroke-width="1.4"/></svg>
<svg class="abs" style="left:1180px;top:0" width="64" height="587"><rect x="0.80" y="54" width="20.70" height="20" fill="#fff"/><line x1="0.80" y1="74" x2="21.50" y2="54" stroke="#f03a2a" stroke-width="1.3"/><rect x="21.50" y="54" width="20.82" height="20" fill="#fdd700"/><rect x="42.30" y="54" width="20.72" height="20" fill="#fb4f3c"/><rect x="0.80" y="74" width="20.72" height="20" fill="#c8418d"/><rect x="21.50" y="74" width="20.82" height="20" fill="#6a4090"/><rect x="42.30" y="74" width="20.72" height="20" fill="#454697"/><rect x="0.80" y="94" width="20.72" height="20" fill="#faf096"/><rect x="21.50" y="94" width="20.82" height="20" fill="#fdb3be"/><rect x="42.30" y="94" width="20.72" height="20" fill="#f4aee0"/><rect x="0.80" y="114" width="20.72" height="20" fill="#bb92dd"/><rect x="21.50" y="114" width="20.82" height="20" fill="#6ecdf0"/><rect x="42.30" y="114" width="20.72" height="20" fill="#7fe2cf"/><rect x="0.80" y="134" width="20.72" height="20" fill="#a09c98"/><rect x="21.50" y="134" width="20.82" height="20" fill="#0f9ad0"/><rect x="42.30" y="134" width="20.72" height="20" fill="#3ccf43"/><rect x="0.80" y="154" width="20.72" height="20" fill="#fde71a"/><rect x="21.50" y="154" width="20.82" height="20" fill="#fda54c"/><rect x="42.30" y="154" width="20.72" height="20" fill="#fb716f"/><rect x="0.80" y="174" width="20.72" height="20" fill="#fb48a8"/><rect x="21.50" y="174" width="20.82" height="20" fill="#df3ec6"/><rect x="42.30" y="174" width="20.72" height="20" fill="#ab9871"/><rect x="0.80" y="194" width="20.72" height="20" fill="#a99470"/><rect x="21.50" y="194" width="20.82" height="20" fill="#aa9270"/><rect x="42.30" y="194" width="20.72" height="20" fill="#ab9070"/><rect x="0.80" y="214" width="20.72" height="20" fill="#b08e78"/><rect x="21.50" y="214" width="20.82" height="20" fill="#b08a74"/><rect x="42.30" y="214" width="20.72" height="20" fill="#b8babc"/><rect x="0.80" y="234" width="20.72" height="20" fill="#fee97c"/><rect x="21.50" y="234" width="20.82" height="20" fill="#fde96a"/><rect x="42.30" y="234" width="20.72" height="20" fill="#fde82a"/><rect x="0.80" y="254" width="20.72" height="20" fill="#fee600"/><rect x="21.50" y="254" width="20.82" height="20" fill="#b5a030"/><rect x="42.30" y="254" width="20.72" height="20" fill="#958540"/><rect x="0.80" y="274" width="20.72" height="20" fill="#7a7048"/><rect x="21.50" y="274" width="20.82" height="20" fill="#fee5a5"/><rect x="42.30" y="274" width="20.72" height="20" fill="#f3dea5"/><rect x="0.80" y="294" width="20.72" height="20" fill="#f5cf80"/><rect x="21.50" y="294" width="20.82" height="20" fill="#fdca40"/><rect x="42.30" y="294" width="20.72" height="20" fill="#eab01a"/><rect x="0.80" y="314" width="20.72" height="20" fill="#eeb530"/><rect x="21.50" y="314" width="20.82" height="20" fill="#cca070"/><rect x="42.30" y="314" width="20.72" height="20" fill="#fee8a0"/><rect x="0.80" y="334" width="20.72" height="20" fill="#fee088"/><rect x="21.50" y="334" width="20.82" height="20" fill="#fee57a"/><rect x="42.30" y="334" width="20.72" height="20" fill="#fed878"/><rect x="0.80" y="354" width="20.72" height="20" fill="#fed888"/><rect x="21.50" y="354" width="20.82" height="20" fill="#f0c070"/><rect x="42.30" y="354" width="20.72" height="20" fill="#e0a050"/><rect x="0.80" y="374" width="20.72" height="20" fill="#fee56a"/><rect x="21.50" y="374" width="20.82" height="20" fill="#fee25a"/><rect x="42.30" y="374" width="20.72" height="20" fill="#fedc30"/><rect x="0.80" y="394" width="20.72" height="20" fill="#fec500"/><rect x="21.50" y="394" width="20.82" height="20" fill="#c89a28"/><rect x="42.30" y="394" width="20.72" height="20" fill="#9a8840"/><rect x="0.80" y="414" width="20.72" height="20" fill="#857840"/><rect x="21.50" y="414" width="20.82" height="20" fill="#fee060"/><rect x="42.30" y="414" width="20.72" height="20" fill="#fed850"/><rect x="0.80" y="434" width="20.72" height="20" fill="#fecd30"/><rect x="21.50" y="434" width="20.82" height="20" fill="#feb518"/><rect x="42.30" y="434" width="20.72" height="20" fill="#b89030"/><rect x="0.80" y="454" width="20.72" height="20" fill="#9a8040"/><rect x="21.50" y="454" width="20.82" height="20" fill="#807048"/><rect x="42.30" y="454" width="20.72" height="20" fill="#fde088"/><rect x="0.80" y="474" width="20.72" height="20" fill="#fdcb60"/><rect x="21.50" y="474" width="20.82" height="20" fill="#f8b048"/><rect x="42.30" y="474" width="20.72" height="20" fill="#f59a30"/><rect x="0.80" y="494" width="20.72" height="20" fill="#c08030"/><rect x="21.50" y="494" width="20.82" height="20" fill="#8a7840"/><rect x="42.30" y="494" width="20.72" height="20" fill="#786848"/><rect x="0.80" y="514" width="20.72" height="20" fill="#eedd98"/><rect x="21.50" y="514" width="20.82" height="20" fill="#e8d290"/><rect x="42.30" y="514" width="20.72" height="20" fill="#d6c890"/><rect x="0.80" y="534" width="20.72" height="20" fill="#c8b480"/><rect x="21.50" y="534" width="20.82" height="20" fill="#b8a47e"/><rect x="42.30" y="534" width="20.72" height="20" fill="#a89070"/><rect x="0.80" y="554" width="20.72" height="20" fill="#a08a68"/><rect x="21.50" y="554" width="20.82" height="20" fill="#fee49a"/><rect x="42.30" y="554" width="20.72" height="20" fill="#fed880"/><rect x="0.80" y="574" width="20.72" height="20" fill="#fdb850"/><rect x="21.50" y="574" width="20.82" height="20" fill="#fdaa38"/><rect x="42.30" y="574" width="20.72" height="20" fill="#b88840"/><rect x="21.20" y="54" width="0.6" height="540" fill="rgba(0,0,0,0.18)"/><rect x="42.00" y="54" width="0.6" height="540" fill="rgba(0,0,0,0.18)"/></svg>
<div class="abs" style="left:1200.6px;top:274px;width:22.5px;height:20px;border:1.6px solid #000;box-shadow:inset 0 0 0 2.2px #fafafa"></div>
<div class="abs" style="left:1243px;top:8px;width:5px;height:579px;background:#2c2c2c"></div>
<div class="abs" style="left:1246px;top:8px;width:1px;height:579px;background:#111"></div>
<div class="abs" style="left:0;top:586px;width:1248px;height:1px;background:rgba(140,140,140,0.6);z-index:5"></div>
</body></html>
